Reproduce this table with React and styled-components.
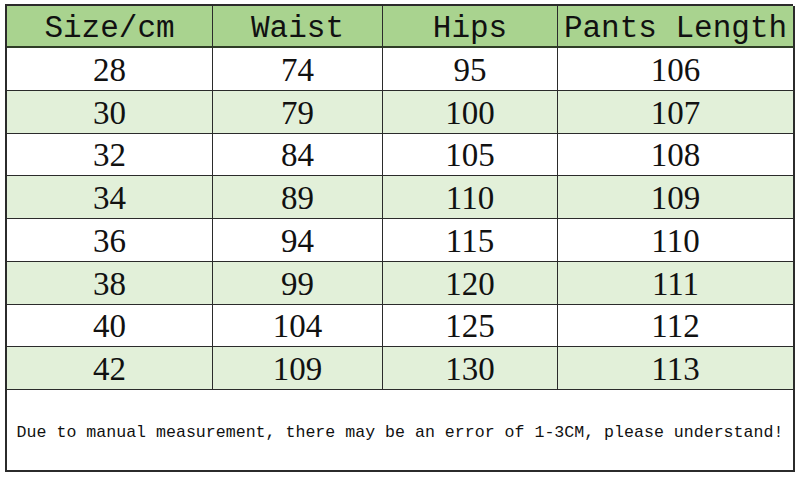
import styled, { createGlobalStyle } from "styled-components";

const GlobalStyle = createGlobalStyle`
  html, body {
    margin: 0;
    padding: 0;
    background: #ffffff;
  }
  * {
    box-sizing: border-box;
  }
`;

const headers = ["Size/cm", "Waist", "Hips", "Pants Length"];

const rows = [
  [28, 74, 95, 106],
  [30, 79, 100, 107],
  [32, 84, 105, 108],
  [34, 89, 110, 109],
  [36, 94, 115, 110],
  [38, 99, 120, 111],
  [40, 104, 125, 112],
  [42, 109, 130, 113],
];

const Page = styled.div`
  width: 800px;
  height: 479px;
  padding: 4px 0 0 5px;
`;

const Table = styled.div`
  display: grid;
  width: 788px;
  grid-template-columns: 206px 170px 175px 237px;
  grid-template-rows: 42px repeat(8, 42.75px) 82px;
  border-top: 2px solid #2b2b2b;
  border-left: 2px solid #2b2b2b;
`;

const Cell = styled.div`
  display: flex;
  align-items: center;
  justify-content: center;
  border-right: ${(p) => (p.last ? "2px" : "1px")} solid #2b2b2b;
  border-bottom: ${(p) => (p.head ? "2px solid #2f3d26" : "1px solid #2b2b2b")};
  background: ${(p) => (p.head ? "#a9d38f" : p.shade ? "#e2f0d9" : "#ffffff")};
  color: #111;
  font-family: ${(p) =>
    p.head ? '"Liberation Mono", "DejaVu Sans Mono", monospace' : '"Liberation Serif", "Times New Roman", serif'};
  font-size: ${(p) => (p.head ? "31px" : "33px")};
  line-height: 1;
  padding-top: ${(p) => (p.head ? "5px" : "3px")};
  white-space: nowrap;
`;

const Note = styled.div`
  grid-column: 1 / -1;
  display: flex;
  align-items: center;
  justify-content: center;
  border-right: 2px solid #2b2b2b;
  border-bottom: 2px solid #2b2b2b;
  font-family: "Liberation Mono", "DejaVu Sans Mono", monospace;
  font-size: 16.6px;
  color: #111;
  padding-top: 5px;
  white-space: nowrap;
`;

export default function App() {
  return (
    <>
      <GlobalStyle />
      <Page>
        <Table>
          {headers.map((h, i) => (
            <Cell key={h} head last={i === headers.length - 1}>
              {h}
            </Cell>
          ))}
          {rows.map((row, r) =>
            row.map((v, c) => (
              <Cell key={`${r}-${c}`} shade={r % 2 === 1} last={c === row.length - 1}>
                {v}
              </Cell>
            ))
          )}
          <Note>
            Due to manual measurement, there may be an error of 1-3CM, please understand!
          </Note>
        </Table>
      </Page>
    </>
  );
}
